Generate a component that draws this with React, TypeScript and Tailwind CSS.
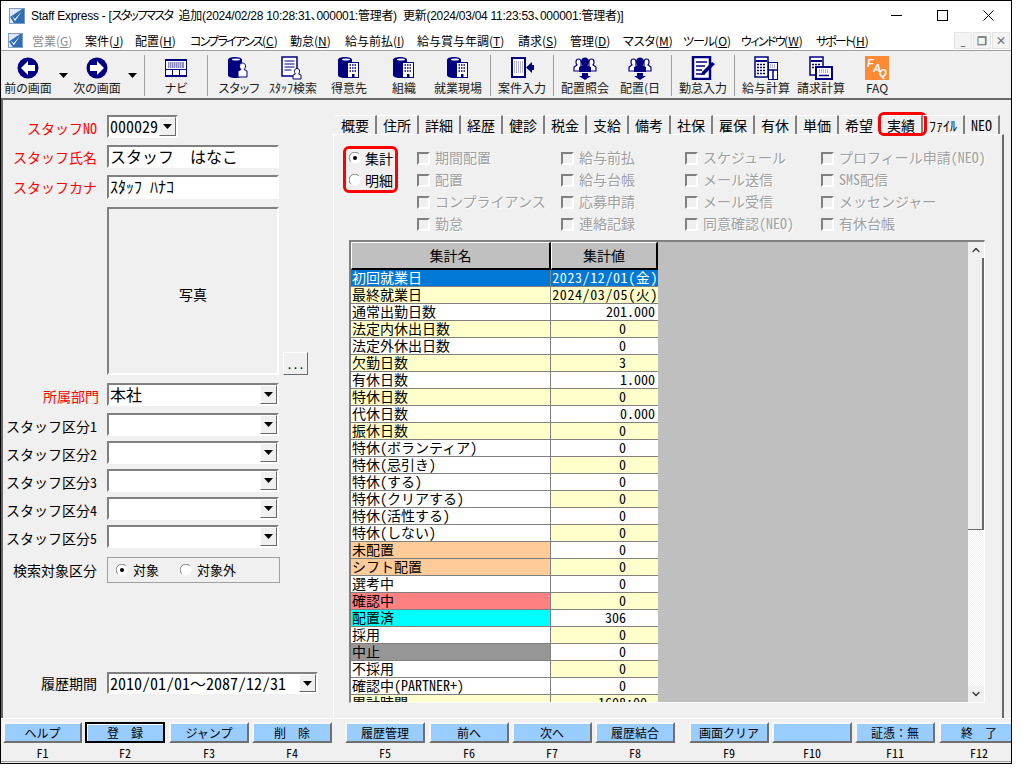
import React from 'react';
import { ChevronDown, ChevronUp } from 'lucide-react';

const NAVY = '#000080';

// Small down triangle used by combo boxes and toolbar dropdowns
function Caret() {
  return (
    <svg width="9" height="5" viewBox="0 0 9 5" className="block">
      <path d="M0 0h9L4.5 5z" fill="#000" />
    </svg>
  );
}

function AppIcon({ className }: { className: string }) {
  return (
    <svg viewBox="0 0 16 16" className={className}>
      <rect x="0.5" y="0.5" width="15" height="15" fill="#dfeaf6" stroke="#7d9cc4" />
      <path d="M1 9l4 6h10V1h-2z" fill="#2f6db5" />
      <path d="M3 8l3 3 7-8-6.500 9.500L6 13z" fill="#fff" />
    </svg>
  );
}

function ArrowCircle({ left }: { left?: boolean }) {
  return (
    <svg width="22" height="22" viewBox="0 0 22 22">
      <circle cx="11" cy="11" r="10.500" fill={NAVY} />
      <g transform={left ? undefined : 'matrix(-1 0 0 1 22 0)'}>
        <path d="M4 11l7-7v4h7v6h-7v4z" fill="#fff" />
      </g>
    </svg>
  );
}

function NaviIcon() {
  return (
    <svg width="22" height="18" viewBox="0 0 22 18">
      <rect x="0.500" y="0.500" width="21" height="17" fill="#fff" stroke={NAVY} />
      <rect x="0" y="0" width="22" height="2" fill={NAVY} />
      <rect x="3" y="3" width="16" height="6" fill="#8a8ac0" />
      <path d="M4 4h14M4 6h14M4 8h14" stroke="#fff" strokeDasharray="1 1" />
      <rect x="1" y="10" width="20" height="1" fill={NAVY} />
      <path d="M7.500 11v6M14.500 11v6" stroke={NAVY} />
      <rect x="0" y="16" width="22" height="2" fill={NAVY} />
    </svg>
  );
}

function Drum() {
  return <path d="M1 4c0-2 3-3 7-3s7 1 7 3v15c0 2-3 3-7 3s-7-1-7-3z" fill={NAVY} />;
}

function DrumPerson() {
  return (
    <svg width="24" height="24" viewBox="0 0 24 24">
      <Drum />
      <ellipse cx="9" cy="3.500" rx="4" ry="1" fill="#fff" />
      <path d="M11 21v-6l3-1.500c-1-1-1.500-2-1.500-3.500 0-2 1.500-3 3-3s3 1 3 3c0 1.500-.5 2.500-1.500 3.500l3 1.500v6z" fill="#fff" stroke={NAVY} />
    </svg>
  );
}

function DrumBuilding() {
  return (
    <svg width="24" height="24" viewBox="0 0 24 24">
      <Drum />
      <ellipse cx="9" cy="3.500" rx="4" ry="1" fill="#fff" />
      <rect x="10.500" y="6.500" width="11" height="15" fill="#fff" stroke={NAVY} />
      <path d="M12.500 9h7M12.500 12h7M12.500 15h7" stroke={NAVY} strokeWidth="1.500" strokeDasharray="1.500 1" />
      <rect x="15" y="18" width="2.500" height="3.500" fill={NAVY} />
    </svg>
  );
}

function DocPerson() {
  return (
    <svg width="24" height="24" viewBox="0 0 24 24">
      <rect x="1" y="1" width="15" height="19" fill="#fff" stroke={NAVY} strokeWidth="1.500" />
      <path d="M3.500 5h10M3.500 8h10M3.500 11h10M3.500 14h7" stroke={NAVY} />
      <path d="M12 23v-4l2.500-1c-1-1-1-2-1-3 0-1.500 1-2.500 2.500-2.500s2.500 1 2.500 2.500c0 1 0 2-1 3l2.500 1v4z" fill="#fff" stroke={NAVY} />
    </svg>
  );
}

function InputIcon() {
  return (
    <svg width="24" height="24" viewBox="0 0 24 24">
      <rect x="1" y="1" width="15" height="21" fill={NAVY} />
      <rect x="3" y="3" width="11" height="17" fill="#fff" />
      <path d="M4 6h9M4 8h9M4 10h9M4 12h9M4 14h9M4 16h9" stroke="#6a6aa8" strokeDasharray="1 1" />
      <path d="M16 11.500l6-5.500v3h2v5h-2v3z" fill={NAVY} />
    </svg>
  );
}

function PeopleIcon() {
  return (
    <svg width="24" height="24" viewBox="0 0 24 24">
      <g fill="#fff" stroke={NAVY} strokeWidth="1.200">
        <path d="M1 15v-4l3-2c-1-1-1-2-1-3 0-2 1-3 2.500-3S8 4 8 6v9z" />
        <path d="M23 15v-4l-3-2c1-1 1-2 1-3 0-2-1-3-2.500-3S16 4 16 6v9z" />
      </g>
      <path d="M6 16v-5l3.500-1.500C8.500 8 8 7 8 5.500 8 3 10 1.500 12 1.500S16 3 16 5.500c0 1.500-.5 2.500-1.500 4L18 11v5z" fill={NAVY} />
      <path d="M9 17h6v3h3l-6 4-6-4h3z" fill={NAVY} />
    </svg>
  );
}

function PencilDoc() {
  return (
    <svg width="24" height="24" viewBox="0 0 24 24">
      <rect x="2" y="1" width="17" height="22" fill="#fff" stroke={NAVY} strokeWidth="2.500" />
      <path d="M5 6h11M5 10h9M5 14h6M5 18h9" stroke={NAVY} strokeWidth="1.500" />
      <path d="M11 16l10-10 3 2-10 10-4 1z" fill={NAVY} />
    </svg>
  );
}

function SalaryIcon() {
  return (
    <svg width="24" height="24" viewBox="0 0 24 24">
      <rect x="1" y="1" width="13" height="20" fill="#fff" stroke={NAVY} strokeWidth="1.500" />
      <path d="M2 5h11" stroke={NAVY} strokeWidth="2" />
      <path d="M3 8.500h9M3 11.500h9M3 14.500h9M3 17.500h9" stroke={NAVY} strokeWidth="1.500" strokeDasharray="2 1" />
      <rect x="14.500" y="6.500" width="9" height="17" fill="#fff" stroke={NAVY} />
      <path d="M16 9h6M16 11h6" stroke="#6a6aa8" strokeDasharray="1 1" />
      <path d="M15 14h8M19 14v9" stroke={NAVY} strokeWidth="1.500" />
    </svg>
  );
}

function BillingIcon() {
  return (
    <svg width="24" height="24" viewBox="0 0 24 24">
      <rect x="1" y="1" width="13" height="18" fill="#fff" stroke={NAVY} strokeWidth="1.500" />
      <path d="M2 5h11" stroke={NAVY} strokeWidth="2" />
      <path d="M3 8.500h9M3 11.500h9" stroke={NAVY} strokeWidth="1.500" strokeDasharray="2 1" />
      <rect x="7" y="11" width="16" height="12" fill="#fff" stroke={NAVY} strokeWidth="2" />
      <path d="M10 14h10M10 16h10" stroke="#6a6aa8" strokeDasharray="1 1" />
      <path d="M10 19.500h10" stroke={NAVY} strokeWidth="1.500" />
    </svg>
  );
}

function FaqIcon() {
  return (
    <div className="relative h-[24px] w-[24px] bg-[#ff8a35] font-['Liberation_Sans',sans-serif] text-[11px] leading-none font-bold text-white italic">
      <span className="absolute top-[2px] left-[2px]">F</span>
      <span className="absolute top-[7px] left-[8px]">A</span>
      <span className="absolute top-[13px] left-[14px] text-[10px]">Q</span>
    </div>
  );
}

const toolbar: ({ w: number; label?: string; icon?: React.ReactNode; sep?: number; caret?: boolean; })[] = [
  { w: 54, label: '前の画面', icon: <ArrowCircle left /> },
  { w: 16, caret: true },
  { w: 52, label: '次の画面', icon: <ArrowCircle /> },
  { w: 18, caret: true },
  { w: 1, sep: 3 },
  { w: 62, label: 'ナビ', icon: <NaviIcon /> },
  { w: 1, sep: 0 },
  { w: 62, label: 'スタッフ', icon: <DrumPerson /> },
  { w: 46, label: 'ｽﾀｯﾌ検索', icon: <DocPerson /> },
  { w: 66, label: '得意先', icon: <DrumBuilding /> },
  { w: 44, label: '組織', icon: <DrumBuilding /> },
  { w: 64, label: '就業現場', icon: <DrumBuilding /> },
  { w: 1, sep: 0 },
  { w: 62, label: '案件入力', icon: <InputIcon /> },
  { w: 1, sep: 0 },
  { w: 62, label: '配置照会', icon: <PeopleIcon /> },
  { w: 48, label: '配置(日', icon: <PeopleIcon /> },
  { w: 1, sep: 7 },
  { w: 62, label: '勤怠入力', icon: <PencilDoc /> },
  { w: 1, sep: 0 },
  { w: 62, label: '給与計算', icon: <SalaryIcon /> },
  { w: 48, label: '請求計算', icon: <BillingIcon /> },
  { w: 64, label: 'FAQ', icon: <FaqIcon /> },
];

const menus = [
  { w: 53, name: '営業', key: 'G', off: true },
  { w: 50, name: '案件', key: 'J' },
  { w: 55, name: '配置', key: 'H' },
  { w: 100, name: 'コンプライアンス', key: 'C', track: 'tracking-[-1.700px]' },
  { w: 55, name: '勤怠', key: 'N' },
  { w: 72, name: '給与前払', key: 'I' },
  { w: 101, name: '給与賞与年調', key: 'T' },
  { w: 52, name: '請求', key: 'S' },
  { w: 53, name: '管理', key: 'D' },
  { w: 60, name: 'マスタ', key: 'M' },
  { w: 58, name: 'ツール', key: 'O', track: 'tracking-[-1px]' },
  { w: 75, name: 'ウィンドウ', key: 'W', track: 'tracking-[-1.600px]' },
  { w: 60, name: 'サポート', key: 'H', track: 'tracking-[-2px]' },
];

const tabs = [
  ['概要', 42], ['住所', 42], ['詳細', 42], ['経歴', 42], ['健診', 42], ['税金', 42], ['支給', 42], ['備考', 42],
  ['社保', 42], ['雇保', 42], ['有休', 42], ['単価', 42], ['希望', 42], ['実績', 42], ['ﾌｧｲﾙ', 42], ['NEO', 35],
] as [string, number][];

const checkColumns = [
  { w: 144, items: ['期間配置', '配置', 'コンプライアンス', '勤怠'] },
  { w: 124, items: ['給与前払', '給与台帳', '応募申請', '連絡記録'] },
  { w: 136, items: ['スケジュール', 'メール送信', 'メール受信', '同意確認(NEO)'] },
  { w: 170, items: ['プロフィール申請(NEO)', 'SMS配信', 'メッセンジャー', '有休台帳'] },
];

const W = 'bg-white';
const Y = 'bg-[#ffffcc]';

const rows: { name: string; value: string; a: string; b: string; pr?: string; selected?: boolean }[] = [
  { name: '初回就業日', value: '2023/12/01(金)', a: 'bg-[#0078d7]', b: 'bg-[#0078d7]', pr: 'pr-0 tracking-[0.600px]', selected: true },
  { name: '最終就業日', value: '2024/03/05(火)', a: Y, b: Y, pr: 'pr-0 tracking-[0.600px]' },
  { name: '通常出勤日数', value: '201.000', a: W, b: W, pr: 'pr-[3px]' },
  { name: '法定内休出日数', value: '0', a: Y, b: Y },
  { name: '法定外休出日数', value: '0', a: W, b: W },
  { name: '欠勤日数', value: '3', a: Y, b: Y },
  { name: '有休日数', value: '1.000', a: W, b: W, pr: 'pr-[3px]' },
  { name: '特休日数', value: '0', a: Y, b: Y },
  { name: '代休日数', value: '0.000', a: W, b: W, pr: 'pr-[3px]' },
  { name: '振休日数', value: '0', a: Y, b: Y },
  { name: '特休(ボランティア)', value: '0', a: W, b: W },
  { name: '特休(忌引き)', value: '0', a: W, b: Y },
  { name: '特休(する)', value: '0', a: W, b: W },
  { name: '特休(クリアする)', value: '0', a: W, b: Y },
  { name: '特休(活性する)', value: '0', a: W, b: W },
  { name: '特休(しない)', value: '0', a: W, b: Y },
  { name: '未配置', value: '0', a: 'bg-[#ffcc99]', b: W },
  { name: 'シフト配置', value: '0', a: 'bg-[#ffcc99]', b: Y },
  { name: '選考中', value: '0', a: W, b: W },
  { name: '確認中', value: '0', a: 'bg-[#ff8080]', b: Y },
  { name: '配置済', value: '306', a: 'bg-[#00ffff]', b: W },
  { name: '採用', value: '0', a: W, b: Y },
  { name: '中止', value: '0', a: 'bg-[#969696]', b: W },
  { name: '不採用', value: '0', a: W, b: Y },
  { name: '確認中(PARTNER+)', value: '0', a: W, b: W },
  { name: '累計時間', value: '1608:00', a: Y, b: Y, pr: 'pr-[11px]' },
];

const fkeys = [
  { label: 'ヘルプ', key: 'F1', ml: 'ml-[2px]', w: 'w-[79px]' },
  { label: '登　録', key: 'F2', ml: 'ml-[3px]', focus: true },
  { label: 'ジャンプ', key: 'F3', ml: 'ml-[4px]' },
  { label: '削　除', key: 'F4', ml: 'ml-[3px]' },
  { label: '履歴管理', key: 'F5', ml: 'ml-[13px]' },
  { label: '前へ', key: 'F6', ml: 'ml-[4px]' },
  { label: '次へ', key: 'F7', ml: 'ml-[3px]' },
  { label: '履歴結合', key: 'F8', ml: 'ml-[3px]' },
  { label: '画面クリア', key: 'F9', ml: 'ml-[14px]' },
  { label: '', key: 'F10', ml: 'ml-[3px]' },
  { label: '証憑：無', key: 'F11', ml: 'ml-[3px]' },
  { label: '終　了', key: 'F12', ml: 'ml-[4px]' },
];

const sunken = 'border-2 border-t-[#808080] border-l-[#808080] border-r-white border-b-white';
const raised = 'border border-t-white border-l-white border-r-[#696969] border-b-[#696969]';

function Label({ text, red, className = '' }: { text: string; red?: boolean; className?: string }) {
  return (
    <div className={`w-[94px] shrink-0 text-right text-[14px] leading-[16px] whitespace-nowrap ${red ? 'text-[#ff0000]' : 'text-black'} ${className}`}>
      {text}
    </div>
  );
}

function Combo({ value, className, h = 'h-[23px]' }: { value?: React.ReactNode; className: string; h?: string }) {
  return (
    <div className={`ml-[10px] flex ${h} shrink-0 bg-white ${sunken} ${className}`}>
      <div className="min-w-0 flex-1 overflow-hidden pl-px text-[16px] leading-[18px] whitespace-nowrap">{value}</div>
      <div className={`flex w-[17px] shrink-0 items-center justify-center bg-[#f0f0f0] ${raised}`}>
        <Caret />
      </div>
    </div>
  );
}

function Field({ value, className }: { value: string; className: string }) {
  return (
    <div className={`ml-[10px] w-[172px] shrink-0 bg-white pl-px text-[16px] leading-[18px] whitespace-nowrap ${sunken} ${className}`}>
      {value}
    </div>
  );
}

function Radio({ on }: { on?: boolean }) {
  return (
    <svg width="12" height="12" viewBox="0 0 12 12" className="shrink-0">
      <circle cx="6" cy="6" r="5.500" fill="#fff" />
      <path d="M1.800 9.800A5.500 5.500 0 0 1 9.800 1.800" fill="none" stroke="#808080" />
      {on && <circle cx="6" cy="6" r="2" fill="#000" />}
    </svg>
  );
}

function Checkbox({ label }: { label: string }) {
  return (
    <div className="flex h-[22px] items-center whitespace-nowrap">
      <div className={`h-[13px] w-[13px] shrink-0 bg-[#f0f0f0] ${sunken}`} />
      <span className="ml-[5px] -translate-y-px text-[14px] leading-[16px] text-[#a0a0a0] [text-shadow:1px_1px_0_#fff]">{label}</span>
    </div>
  );
}

export default function App() {
  return (
    <div className="h-[768px] w-[1024px] bg-white font-['Noto_Sans_CJK_JP','Noto_Sans',sans-serif] text-black">
      <div className="flex h-[764px] w-[1012px] flex-col overflow-hidden border border-black bg-[#f0f0f0] [font-feature-settings:'hwid']">
        {/* title bar */}
        <div className="flex h-[29px] shrink-0 items-center bg-white">
          <AppIcon className="ml-[8px] h-[16px] w-[16px] shrink-0" />
          <div className="ml-[6px] flex-1 font-['Liberation_Sans','Noto_Sans_CJK_JP',sans-serif] text-[12px] tracking-[-0.270px] whitespace-nowrap [font-feature-settings:'palt']">
            Staff Express - [<span className="tracking-[-1.700px]">スタッフマスタ</span>&nbsp;&nbsp;追加(2024/02/28 10:28:31、000001:管理者)&nbsp;&nbsp;更新(2024/03/04 11:23:53、000001:管理者)]
          </div>
          <div className="flex h-full w-[46px] items-center justify-center">
            <svg width="11" height="11" viewBox="0 0 11 11"><path d="M0 5.500h11" stroke="#000" /></svg>
          </div>
          <div className="flex h-full w-[46px] items-center justify-center">
            <svg width="11" height="11" viewBox="0 0 11 11"><rect x="0.500" y="0.500" width="10" height="10" fill="none" stroke="#000" /></svg>
          </div>
          <div className="flex h-full w-[46px] items-center justify-center">
            <svg width="11" height="11" viewBox="0 0 11 11"><path d="M0.500 0.500l10 10M10.500 0.500l-10 10" stroke="#000" /></svg>
          </div>
        </div>

        {/* menu bar */}
        <div className="flex h-[21px] shrink-0 items-center border-b border-[#a0a0a0] bg-white">
          <AppIcon className="ml-[7px] h-[15px] w-[15px] shrink-0" />
          <div className="ml-[9px] flex pt-px text-[12px] leading-[16px] whitespace-nowrap [font-feature-settings:'palt']">
            {menus.map((m) => (
              <div key={m.name} style={{ width: m.w }} className={m.off ? 'text-[#8c8c8c]' : ''}>
                <span className={m.track}>{m.name}</span>(<span className="underline">{m.key}</span>)
              </div>
            ))}
          </div>
          <div className="ml-auto mr-px flex gap-px">
            {['_', '❐', '×'].map((g) => (
              <div key={g} className="flex h-[17px] w-[18px] items-center justify-center border border-[#e4e4e4] bg-[#f4f4f4] text-[11px] leading-none font-bold text-[#707070]">
                {g}
              </div>
            ))}
          </div>
        </div>

        {/* toolbar */}
        <div className="flex h-[49px] shrink-0 border-b-2 border-[#696969] pt-[5px]">
          {toolbar.map((t, i) => {
            if (t.sep !== undefined) {
              return <div key={i} style={{ marginLeft: t.sep }} className="-mt-px mb-[2px] w-px shrink-0 bg-[#a0a0a0]" />;
            }
            if (t.caret) {
              return (
                <div key={i} style={{ width: t.w }} className="flex shrink-0 justify-center pt-[17px]">
                  <Caret />
                </div>
              );
            }
            return (
              <div key={i} style={{ width: t.w }} className="flex shrink-0 flex-col items-center">
                <div className="flex h-[24px] items-center justify-center">{t.icon}</div>
                <div className="text-[12px] leading-[15px] whitespace-nowrap text-[#1a1a1a] [font-feature-settings:'palt']">{t.label}</div>
              </div>
            );
          })}
        </div>

        {/* client area */}
        <div className="flex h-[618px] shrink-0 border-l-2 border-[#696969]">
          {/* staff form */}
          <div className="flex w-[330px] shrink-0 flex-col">
            <div className="mt-[15px] flex">
              <Label text="スタッフNO" red className="mt-[5px]" />
              <Combo value="000029" className="w-[71px]" />
            </div>
            <div className="mt-[7px] flex">
              <Label text="スタッフ氏名" red className="mt-[4px]" />
              <Field value="スタッフ　はなこ" className="h-[23px] [font-feature-settings:normal]" />
            </div>
            <div className="mt-[7px] flex">
              <Label text="スタッフカナ" red className="mt-[4px]" />
              <Field value="ｽﾀｯﾌ ﾊﾅｺ" className="h-[24px]" />
            </div>
            <div className="mt-[8px] ml-[94px] flex items-end">
              <div className={`ml-[10px] flex h-[168px] w-[172px] items-center justify-center bg-[#f0f0f0] pt-[6px] text-[14px] ${sunken}`}>写真</div>
              <div className={`ml-[4px] flex h-[23px] w-[25px] items-center justify-center text-[12px] leading-none ${raised}`}>...</div>
            </div>
            <div className="mt-[8px] flex">
              <Label text="所属部門" red className="mt-[5px] translate-x-[2px]" />
              <Combo value="本社" className="w-[172px]" />
            </div>
            {[1, 2, 3, 4, 5].map((n) => (
              <div key={n} className={`flex ${n === 1 ? 'mt-[7px]' : 'mt-[5px]'}`}>
                <Label text={`スタッフ区分${n}`} className="mt-[5px]" />
                <Combo className="w-[172px]" />
              </div>
            ))}
            <div className="mt-[9px] flex">
              <Label text="検索対象区分" className="mt-[5px]" />
              <div className="ml-[10px] flex h-[26px] w-[173px] items-center border border-[#a0a0a0] pl-[8px] text-[13px]">
                <Radio on />
                <span className="ml-[5px] w-[47px]">対象</span>
                <Radio />
                <span className="ml-[5px]">対象外</span>
              </div>
            </div>
            <div className="mt-[89px] flex">
              <Label text="履歴期間" className="mt-[3px]" />
              <Combo
                value={<>2010/01/01<span className="[font-feature-settings:normal]">～</span>2087/12/31<span className="ml-[11px]">コース</span></>}
                className="w-[211px]"
                h="h-[22px]"
              />
            </div>
          </div>

          {/* tabbed panel */}
          <div className="flex min-w-0 flex-1 flex-col">
            <div className="mt-[15px] flex h-[19px] shrink-0 pl-[2px]">
              {tabs.map(([name, w]) => (
                <div key={name} style={{ width: w }} className="relative flex shrink-0 items-center justify-center border-t border-r-2 border-t-white border-r-[#808080] text-[14px] leading-[16px] whitespace-nowrap">
                  {name}
                  {name === '実績' && <div className="absolute -top-[4px] -right-[6px] -bottom-[2px] -left-[3px] rounded-[6px] border-[3px] border-[#ff0000]" />}
                </div>
              ))}
            </div>
            <div className="mr-[7px] flex min-h-0 flex-1 flex-col border-t border-l border-t-white border-l-white border-r-2 border-r-[#696969]">
              <div className="flex h-[105px] shrink-0 pt-[11px] pl-[9px]">
                <div className="flex h-[47px] w-[55px] shrink-0 flex-col justify-center gap-[6px] rounded-[6px] border-[3px] border-[#ff0000] pb-px pl-[3px] text-[14px] leading-[16px]">
                  <div className="flex items-center gap-[4px]"><Radio on />集計</div>
                  <div className="flex items-center gap-[4px]"><Radio />明細</div>
                </div>
                <div className="mt-px ml-[19px] flex">
                  {checkColumns.map((c) => (
                    <div key={c.w} style={{ width: c.w }} className="shrink-0">
                      {c.items.map((it) => <Checkbox key={it} label={it} />)}
                    </div>
                  ))}
                </div>
              </div>

              {/* aggregate grid */}
              <div className="ml-[15px] flex h-[463px] w-[636px] shrink-0 overflow-hidden border-t-2 border-r border-b border-l-2 border-t-[#808080] border-r-white border-b-white border-l-[#808080] bg-[#bfbfbf]">
                <div className="w-[307px] shrink-0">
                  <div className="flex h-[28px] text-[14px]">
                    <div className="flex w-[200px] items-center justify-center border-t border-r-2 border-b-2 border-l border-t-white border-r-black border-b-black border-l-white bg-[#c0c0c0]">集計名</div>
                    <div className="flex w-[107px] items-center justify-center border-t border-r-2 border-b-2 border-l border-t-white border-r-black border-b-black border-l-white bg-[#c0c0c0]">集計値</div>
                  </div>
                  {rows.map((r) => (
                    <div key={r.name} className={`flex h-[17px] border-b border-[#808080] text-[14px] leading-[14px] whitespace-nowrap ${r.selected ? 'text-white' : ''}`}>
                      <div className={`w-[200px] border-r border-[#808080] pl-px ${r.a}`}>{r.name}</div>
                      <div className={`w-[107px] text-right ${r.pr ?? 'pr-[32px]'} ${r.b}`}>{r.value}</div>
                    </div>
                  ))}
                </div>
                <div className="flex-1" />
                <div className="flex w-[16px] shrink-0 flex-col bg-[#f0f0f0]">
                  <div className="flex h-[16px] items-center justify-center">
                    <ChevronUp size={12} strokeWidth={3} color="#404040" />
                  </div>
                  <div className="h-[272px] border-r-2 border-b border-[#696969] bg-[#f0f0f0]" />
                  <div className="flex-1 bg-[repeating-conic-gradient(#f0f0f0_0_25%,#ffffff_0_50%)] bg-[length:2px_2px]" />
                  <div className="flex h-[16px] items-center justify-center">
                    <ChevronDown size={12} strokeWidth={3} color="#404040" />
                  </div>
                </div>
              </div>
            </div>
          </div>
        </div>

        {/* function keys */}
        <div className="flex-1 border-t border-white pt-[3px]">
          <div className="flex">
            {fkeys.map((f) => (
              <div key={f.key} className={`flex shrink-0 flex-col items-center ${f.ml} ${f.w ?? 'w-[80px]'}`}>
                <div className={`flex h-[21px] w-full items-center justify-center border-2 bg-[#99ccff] text-[12px] leading-none [font-feature-settings:normal] ${f.focus ? 'border-black shadow-[inset_1px_1px_0_#fff]' : 'border-t-[#f8f8f8] border-l-[#f8f8f8] border-r-[#707070] border-b-[#707070]'}`}>
                  {f.label}
                </div>
                <div className="mt-[2px] text-[12px] leading-[15px]">{f.key}</div>
              </div>
            ))}
          </div>
          <div className="mt-[1px] h-px bg-[#a0a0a0]" />
        </div>
      </div>
    </div>
  );
}
